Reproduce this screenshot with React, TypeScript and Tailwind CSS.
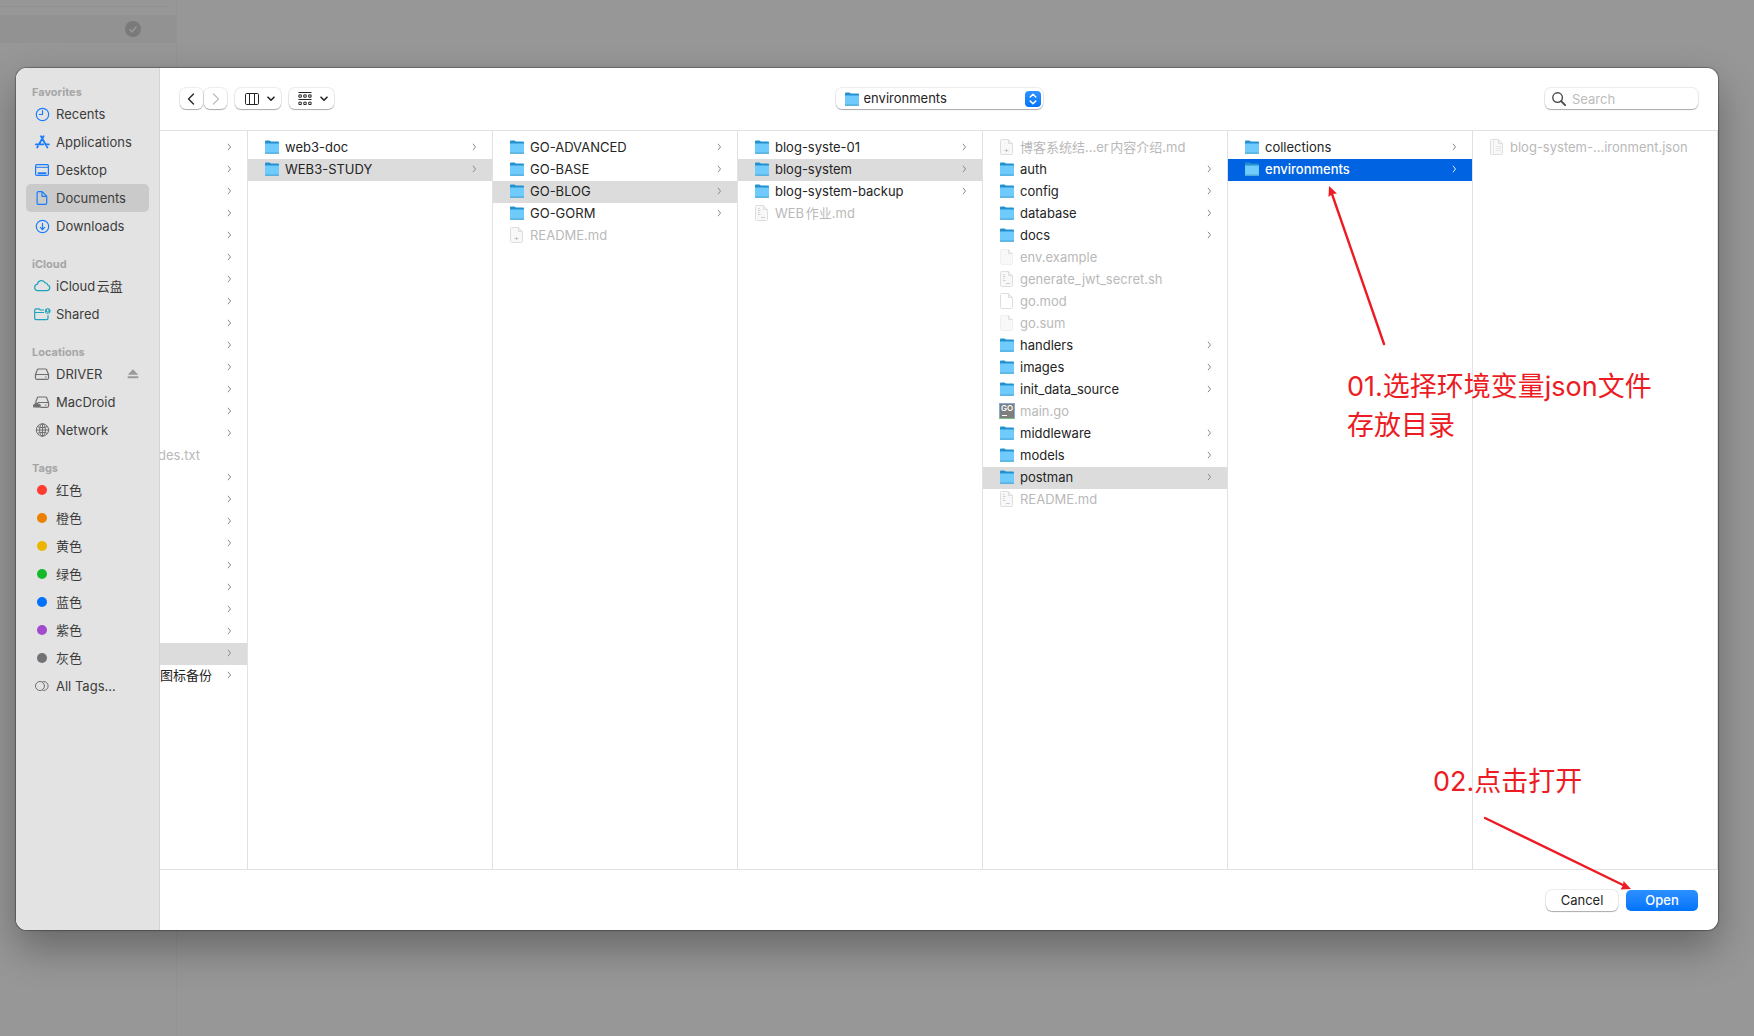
import type { ReactNode } from "react";

type FileKind = "folder" | "plain" | "lines" | "badge" | "outline" | "json" | "go";

type Entry = {
  name: string;
  kind?: FileKind;
  selected?: boolean;
  active?: boolean;
};

const columns: Entry[][] = [
  [{ name: "web3-doc" }, { name: "WEB3-STUDY", selected: true }],
  [
    { name: "GO-ADVANCED" },
    { name: "GO-BASE" },
    { name: "GO-BLOG", selected: true },
    { name: "GO-GORM" },
    { name: "README.md", kind: "badge" },
  ],
  [
    { name: "blog-syste-01" },
    { name: "blog-system", selected: true },
    { name: "blog-system-backup" },
    { name: "WEB作业.md", kind: "lines" },
  ],
  [
    { name: "博客系统结...er内容介绍.md", kind: "badge" },
    { name: "auth" },
    { name: "config" },
    { name: "database" },
    { name: "docs" },
    { name: "env.example", kind: "plain" },
    { name: "generate_jwt_secret.sh", kind: "lines" },
    { name: "go.mod", kind: "outline" },
    { name: "go.sum", kind: "plain" },
    { name: "handlers" },
    { name: "images" },
    { name: "init_data_source" },
    { name: "main.go", kind: "go" },
    { name: "middleware" },
    { name: "models" },
    { name: "postman", selected: true },
    { name: "README.md", kind: "lines" },
  ],
  [{ name: "collections" }, { name: "environments", active: true }],
  [{ name: "blog-system-...ironment.json", kind: "json" }],
];

const scrolledRows = Array.from({ length: 25 }, (_, i) => ({
  label: i === 14 ? "des.txt" : i === 24 ? "图标备份" : "",
  isFile: i === 14,
  selected: i === 23,
}));

function FolderIcon() {
  return (
    <svg viewBox="0 0 16 16" className="size-4 shrink-0" aria-hidden="true">
      <path d="M1 2.600a1 1 0 0 1 1-1h3.400l1.600 1H14a1 1 0 0 1 1 1v3H1z" fill="#2391cf" />
      <path d="M1 4.600h14v9.300a.9.9 0 0 1-.9.9H1.900a.9.9 0 0 1-.9-.9z" fill="#6ecbfb" />
      <path d="M1 13.400h14v.5a.9.9 0 0 1-.9.900H1.900a.9.9 0 0 1-.9-.900z" fill="#4fa9d6" />
    </svg>
  );
}

function FileIcon({ kind }: { kind: FileKind }) {
  if (kind === "folder") return <FolderIcon />;
  if (kind === "go") {
    return (
      <svg viewBox="0 0 16 16" className="size-4 shrink-0" aria-hidden="true">
        <rect width="16" height="16" fill="#80abd8" />
        <path d="M0 15h16v1H0z" fill="#7cc47f" />
        <rect x="1" y="1" width="14" height="14" fill="#7e7e7e" />
        <text x="2" y="8" fontSize="8" fontWeight="600" fill="#fff" fontFamily="Inter, sans-serif">
          GO
        </text>
        <path d="M3 12.500h5" stroke="#fff" />
      </svg>
    );
  }
  return (
    <svg viewBox="0 0 16 16" className="size-4 shrink-0" fill="none" aria-hidden="true">
      <path
        d="M2.500.5h7l4 4V14.500a1 1 0 0 1-1 1h-10a1 1 0 0 1-1-1v-13a1 1 0 0 1 1-1z"
        fill={kind === "outline" ? "#fff" : "#f8f8f8"}
        stroke={kind === "plain" ? "#efefef" : "#dedede"}
      />
      <path d="M9.500.5v4h4" fill="#f0f0f0" stroke="#dedede" />
      {kind === "lines" && (
        <path d="M4 3.500h1.500M4 5.500h2.500M4 7.500h1.500M4 9.500h2.500M7 12.500h4" stroke="#cfcfcf" />
      )}
      {kind === "badge" && <path d="M5.500 11.500h4M7.500 10v3" stroke="#c4c4c4" />}
      {kind === "json" && <path d="M4.500 1.500v13M7 7.500h5M7 9.500h5M7 11.500h5" stroke="#e6e6e6" />}
    </svg>
  );
}

function RowChevron({ light = false }: { light?: boolean }) {
  return (
    <svg
      viewBox="0 0 6 8"
      className={light ? "h-2 w-1.5 shrink-0 text-blue-100" : "h-2 w-1.5 shrink-0 text-[#8c8c8c]"}
      fill="none"
      stroke="currentColor"
      strokeWidth="1"
      aria-hidden="true"
    >
      <path d="M2 .8 4.500 4 2 7.200" />
    </svg>
  );
}

function EntryRow({ entry }: { entry: Entry }) {
  const kind = entry.kind ?? "folder";
  const tone = entry.active
    ? "bg-[#0063e1] font-medium text-white"
    : entry.selected
      ? "bg-[#dcdcdc] text-[#242424]"
      : kind === "folder"
        ? "text-[#242424]"
        : "text-[#b9b9b9]";
  return (
    <li>
      <button
        type="button"
        className={`flex h-[22px] w-full items-center gap-[5px] pr-[15px] pb-0.5 pl-4 text-left whitespace-nowrap ${tone}`}
      >
        <FileIcon kind={kind} />
        <span className="min-w-0 flex-1">{entry.name}</span>
        {kind === "folder" && <RowChevron light={entry.active} />}
      </button>
    </li>
  );
}

function SideIcon({ className, children }: { className: string; children: ReactNode }) {
  return (
    <svg
      viewBox="0 0 18 16"
      className={`h-4 w-[18px] shrink-0 ${className}`}
      fill="none"
      stroke="currentColor"
      strokeWidth="1.200"
      strokeLinecap="round"
      strokeLinejoin="round"
      aria-hidden="true"
    >
      {children}
    </svg>
  );
}

const blue = "text-[#1a7cfb]";
const teal = "text-[#1fa3bd]";
const gray = "text-[#6f6f6f]";

const drive = <path d="M5.300 3h7.400a1 1 0 0 1 .9.600l2 5.200v3a1.600 1.600 0 0 1-1.600 1.600H4A1.600 1.600 0 0 1 2.400 11.800v-3l2-5.200a1 1 0 0 1 .9-.6zM2.400 9.300c.3-.5.900-.8 1.600-.8h10c.7 0 1.300.3 1.600.8M12.500 11h.6" />;

type SideEntry = { label: string; icon: ReactNode; selected?: boolean; eject?: boolean };

const tag = (color: string) => (
  <span className="flex w-[18px] shrink-0 justify-center">
    <span className={`size-2.5 rounded-full ${color}`} />
  </span>
);

const sections: { title: string; items: SideEntry[] }[] = [
  {
    title: "Favorites",
    items: [
      {
        label: "Recents",
        icon: (
          <SideIcon className={blue}>
            <circle cx="9.500" cy="8.500" r="6.200" />
            <path d="M9.500 4.700V8.500H6.300" />
          </SideIcon>
        ),
      },
      {
        label: "Applications",
        icon: (
          <SideIcon className={blue}>
            <path
              d="M8 2.300 12.900 11M10.600 2.300 6.300 9.800M2.900 10.400h7.300M13.300 10.400h2.500M4.900 12.300l-.7 1.200M13.800 12.600l.6 1"
              strokeWidth="1.800"
            />
          </SideIcon>
        ),
      },
      {
        label: "Desktop",
        icon: (
          <SideIcon className={blue}>
            <rect x="2.600" y="2.600" width="12.800" height="10.800" rx="1.200" />
            <path d="M2.600 5.300h12.800" strokeWidth="1" />
            <path d="M5.500 11.300h7" strokeWidth="2" />
          </SideIcon>
        ),
      },
      {
        label: "Documents",
        selected: true,
        icon: (
          <SideIcon className={blue}>
            <path d="M5.400 1.600h3.800l4.500 4.500v7a1.300 1.300 0 0 1-1.300 1.300h-7a1.300 1.300 0 0 1-1.300-1.300V2.900a1.300 1.300 0 0 1 1.300-1.300zM9 1.800v4.500h4.500" />
          </SideIcon>
        ),
      },
      {
        label: "Downloads",
        icon: (
          <SideIcon className={blue}>
            <circle cx="9.500" cy="8.500" r="6.200" />
            <path d="M9.500 5.300v6.200M7.300 9.400l2.200 2.200 2.200-2.200" />
          </SideIcon>
        ),
      },
    ],
  },
  {
    title: "iCloud",
    items: [
      {
        label: "iCloud云盘",
        icon: (
          <SideIcon className={teal}>
            <path d="M4.300 12.700h9.500a2.900 2.900 0 0 0 .8-5.700 2.200 2.200 0 0 0-2.500-2.100 4 4 0 0 0-7.600 1.300A3.300 3.300 0 0 0 4.300 12.700z" />
          </SideIcon>
        ),
      },
      {
        label: "Shared",
        icon: (
          <SideIcon className={teal}>
            <path d="M10.500 4H7.300L6.200 2.800H3A1.300 1.300 0 0 0 1.700 4v8.300a1.300 1.300 0 0 0 1.300 1.300h10.700a1.300 1.300 0 0 0 1.300-1.300V9.500M1.700 6.500h9" />
            <circle cx="14.700" cy="5" r="2.800" fill="currentColor" stroke="none" />
            <circle cx="14.700" cy="4.200" r=".9" fill="#e3e3e3" stroke="none" />
            <path d="M13.400 6.500c.6-.9 2-.9 2.600 0" stroke="#e3e3e3" strokeWidth=".9" />
          </SideIcon>
        ),
      },
    ],
  },
  {
    title: "Locations",
    items: [
      { label: "DRIVER", eject: true, icon: <SideIcon className={gray}>{drive}</SideIcon> },
      {
        label: "MacDroid",
        icon: (
          <SideIcon className={gray}>
            {drive}
            <path
              d="M1.200 13.700a1.800 1.800 0 0 1 0-3.600 2.300 2.300 0 0 1 4.400-.4A2 2 0 0 1 6.500 13.700z"
              fill="currentColor"
              stroke="#e3e3e3"
              strokeWidth=".5"
            />
          </SideIcon>
        ),
      },
      {
        label: "Network",
        icon: (
          <SideIcon className={gray}>
            <g strokeWidth="1">
              <circle cx="9.500" cy="8" r="6.200" />
              <ellipse cx="9.500" cy="8" rx="2.900" ry="6.200" />
              <path d="M3.300 8h12.400M9.500 1.800v12.400M4.600 4.700c2.800 1.300 7 1.300 9.800 0M4.600 11.300c2.800-1.300 7-1.300 9.800 0" />
            </g>
          </SideIcon>
        ),
      },
    ],
  },
  {
    title: "Tags",
    items: [
      { label: "红色", icon: tag("bg-[#ff3b30]") },
      { label: "橙色", icon: tag("bg-[#ec8000]") },
      { label: "黄色", icon: tag("bg-[#ecb500]") },
      { label: "绿色", icon: tag("bg-[#14b92c]") },
      { label: "蓝色", icon: tag("bg-[#0071f9]") },
      { label: "紫色", icon: tag("bg-[#a04bcb]") },
      { label: "灰色", icon: tag("bg-[#717176]") },
      {
        label: "All Tags...",
        icon: (
          <SideIcon className={gray}>
            <circle cx="7" cy="8" r="4.500" strokeWidth="1" />
            <path d="M10 3.500h.6a4.500 4.500 0 0 1 0 9H10" strokeWidth="1" />
          </SideIcon>
        ),
      },
    ],
  },
];

function Sidebar() {
  return (
    <nav
      aria-label="Sidebar"
      className="w-36 shrink-0 border-r border-[#d4d4d4] bg-[#e3e3e3] pr-2.5 pl-2.5 text-[#3c3c3c]"
    >
      {sections.map((section) => (
        <section key={section.title} className="pt-4">
          <h2 className="pl-1.5 text-[11px] leading-4 font-bold text-[#a5a5a5]">{section.title}</h2>
          <ul>
            {section.items.map((item) => (
              <li
                key={item.label}
                className={`flex h-7 items-center rounded-[5px] pr-2.5 ${item.selected ? "bg-[#cacaca]" : ""}`}
              >
                <button type="button" className="flex flex-1 items-center gap-[5px] pl-[7px] text-left whitespace-nowrap">
                  {item.icon}
                  <span>{item.label}</span>
                </button>
                {item.eject && (
                  <button type="button" aria-label="Eject DRIVER" className="text-[#9a9a9a]">
                    <svg viewBox="0 0 12 10" className="h-2.5 w-3" fill="currentColor" aria-hidden="true">
                      <path d="M6 .3 11.300 5.800H.7zM.7 7.200h10.600v2H.7z" />
                    </svg>
                  </button>
                )}
              </li>
            ))}
          </ul>
        </section>
      ))}
    </nav>
  );
}

const control =
  "flex h-[21px] items-center justify-center rounded-[6px] bg-white shadow-[0_0_0_1px_rgba(0,0,0,0.07),0_1px_1px_rgba(0,0,0,0.28)]";

function DownChevron() {
  return (
    <svg viewBox="0 0 8 6" className="h-1.5 w-2" fill="none" stroke="currentColor" strokeWidth="1.600" strokeLinecap="round" strokeLinejoin="round" aria-hidden="true">
      <path d="M1 1.200 4 4.300l3-3.100" />
    </svg>
  );
}

function Toolbar() {
  return (
    <header className="grid h-[63px] shrink-0 grid-cols-[1fr_auto_1fr] items-center border-b border-[#e2e2e2] px-5 pb-px">
      <div className="flex text-[#262626]">
        <button type="button" aria-label="Back" className={`${control} w-[23px] pr-0.5`}>
          <svg viewBox="0 0 8 12" className="h-3 w-2" fill="none" stroke="currentColor" strokeWidth="1.400" strokeLinecap="round" strokeLinejoin="round" aria-hidden="true">
            <path d="M6.500 1 1.500 6l5 5" />
          </svg>
        </button>
        <button type="button" aria-label="Forward" className={`${control} ml-px w-[23px] text-[#bdbdbd]`}>
          <svg viewBox="0 0 8 12" className="h-3 w-2" fill="none" stroke="currentColor" strokeWidth="1.200" strokeLinecap="round" strokeLinejoin="round" aria-hidden="true">
            <path d="m1.500 1 5 5-5 5" />
          </svg>
        </button>
        <button type="button" aria-label="View as columns" className={`${control} ml-2 w-[46px] gap-2 pl-1`}>
          <svg viewBox="0 0 14 12" className="h-3 w-3.5" fill="none" stroke="currentColor" aria-hidden="true">
            <rect x=".5" y=".5" width="13" height="11" rx="1.200" />
            <path d="M4.500.5v11M9.500.5v11" />
          </svg>
          <DownChevron />
        </button>
        <button type="button" aria-label="Group items" className={`${control} ml-2 w-[45px] gap-2 pl-0.5`}>
          <svg viewBox="0 0 14 14" className="size-3.5" fill="none" stroke="currentColor" strokeWidth="1" aria-hidden="true">
            <path d="M.5.5h13M.5 7.500h13" />
            <path d="M.9 2.900h2.400v2.300H.9zM5.800 2.900h2.400v2.300H5.800zM10.700 2.900h2.400v2.300h-2.400zM.9 10.200h2.400v2.300H.9zM5.800 10.200h2.400v2.300H5.800zM10.700 10.200h2.400v2.300h-2.400z" />
          </svg>
          <DownChevron />
        </button>
      </div>

      <div className={`${control} relative w-[207px]`}>
        <span className="pointer-events-none absolute left-2">
          <FolderIcon />
        </span>
        <select
          aria-label="Current folder"
          defaultValue="environments"
          className="h-full w-full appearance-none rounded-[6px] bg-transparent pr-6 pb-px pl-7 text-[#242424] outline-none"
        >
          <option value="environments">environments</option>
          <option value="postman">postman</option>
          <option value="blog-system">blog-system</option>
        </select>
        <span className="pointer-events-none absolute right-0.5 flex size-4 items-center justify-center rounded-[4px] bg-linear-to-b from-[#2e92ff] to-[#0074f8]">
          <svg viewBox="0 0 8 12" className="h-3 w-2" fill="none" stroke="#fff" strokeWidth="1.500" strokeLinecap="round" strokeLinejoin="round" aria-hidden="true">
            <path d="M1.200 4 4 1.300 6.800 4M1.200 8 4 10.700 6.800 8" />
          </svg>
        </span>
      </div>

      <label className={`${control} w-[153px] gap-1.5 justify-self-end pl-[7px]`}>
        <svg viewBox="0 0 14 14" className="size-3.5 shrink-0 text-[#4a4a4a]" fill="none" stroke="currentColor" strokeLinecap="round" aria-hidden="true">
          <circle cx="5.600" cy="5.600" r="4.800" strokeWidth="1.400" />
          <path d="m9.200 9.200 3.900 3.900" strokeWidth="1.900" />
        </svg>
        <input
          type="search"
          aria-label="Search"
          placeholder="Search"
          className="min-w-0 flex-1 bg-transparent outline-none placeholder:text-[#bcbcbc]"
        />
      </label>
    </header>
  );
}

function Browser() {
  return (
    <div className="flex min-h-0 flex-1 border-b border-[#e2e2e2]">
      <ul className="w-[88px] shrink-0 overflow-hidden border-r border-[#e2e2e2] pt-1.5">
        {scrolledRows.map((row, i) => (
          <li key={i}>
            <button
              type="button"
              aria-label={row.label || "Folder"}
              className={`flex h-[22px] w-full items-center justify-between pr-[15px] pb-0.5 whitespace-nowrap ${
                row.selected ? "bg-[#dcdcdc]" : ""
              } ${row.isFile ? "text-[#b9b9b9]" : "text-[#242424]"}`}
            >
              <span className={row.isFile ? "-ml-0.5" : ""}>{row.label}</span>
              {!row.isFile && <RowChevron />}
            </button>
          </li>
        ))}
      </ul>
      {columns.map((entries, i) => (
        <ul key={i} className="min-w-0 flex-1 overflow-hidden border-r border-[#e2e2e2] pt-1.5">
          {entries.map((entry) => (
            <EntryRow key={entry.name} entry={entry} />
          ))}
        </ul>
      ))}
    </div>
  );
}

function Annotations() {
  return (
    <div className="pointer-events-none absolute inset-0 text-[27px] leading-[39px] text-[#ed1c24] [text-autospace:no-autospace]">
      <svg viewBox="0 0 70 170" className="absolute top-[114px] right-[330px] h-[170px] w-[70px]" aria-hidden="true">
        <path d="M66 162 14 12" stroke="#ed1c24" strokeWidth="2.400" strokeLinecap="round" />
        <path d="M11 4 19 11.500 14.500 12 10.500 15z" fill="#ed1c24" />
      </svg>
      <p className="absolute top-[299px] right-[60px] w-[311px]">
        01.选择环境变量json文件
        <br />
        存放目录
      </p>
      <p className="absolute top-[694px] right-[125px] w-[160px]">02.点击打开</p>
      <svg viewBox="0 0 160 80" className="absolute top-[746px] right-[80px] h-20 w-40" aria-hidden="true">
        <path d="M7 4 145 71" stroke="#ed1c24" strokeWidth="2.400" strokeLinecap="round" />
        <path d="M153 75l-10.500.5 2.500-4 .5-4.500z" fill="#ed1c24" />
      </svg>
    </div>
  );
}

export default function App() {
  return (
    <div className="relative flex min-h-screen flex-col overflow-hidden bg-[#979797] pt-[68px] pr-9 pb-[106px] pl-4 font-['Inter','Noto_Sans_CJK_SC',sans-serif] text-[13px] leading-4 [text-autospace:normal]">
      <div className="absolute inset-y-0 left-0 w-[177px] border-r border-[#929292]" aria-hidden="true">
        <div className="mt-1.5 mr-2 h-px bg-[#919191]" />
        <div className="mt-2 flex h-7 items-center justify-end bg-[#929292] pr-[35px]">
          <svg viewBox="0 0 16 16" className="size-4">
            <circle cx="8" cy="8" r="8" fill="#7a7a7a" />
            <path d="m4.500 8.300 2.500 2.500L11.500 5.500" fill="none" stroke="#979797" strokeWidth="1.600" />
          </svg>
        </div>
      </div>

      <div
        role="dialog"
        aria-label="Open file"
        className="relative flex flex-1 rounded-[11px] shadow-[0_0_1px_1px_rgba(0,0,0,0.3),0_18px_40px_rgba(0,0,0,0.32)]"
      >
        <div className="flex min-w-0 flex-1 overflow-hidden rounded-[11px] bg-white">
          <Sidebar />
          <main className="flex min-w-0 flex-1 flex-col">
            <Toolbar />
            <Browser />
            <footer className="flex h-[60px] shrink-0 items-center justify-end gap-2 px-5">
              <button type="button" className={`${control} w-[72px] pb-px text-[#242424]`}>
                Cancel
              </button>
              <button
                type="button"
                className="flex h-[21px] w-[72px] items-center justify-center rounded-[5px] bg-linear-to-b from-[#2b90ff] to-[#0074fa] pb-px font-medium text-white"
              >
                Open
              </button>
            </footer>
          </main>
        </div>
        <Annotations />
      </div>
    </div>
  );
}
